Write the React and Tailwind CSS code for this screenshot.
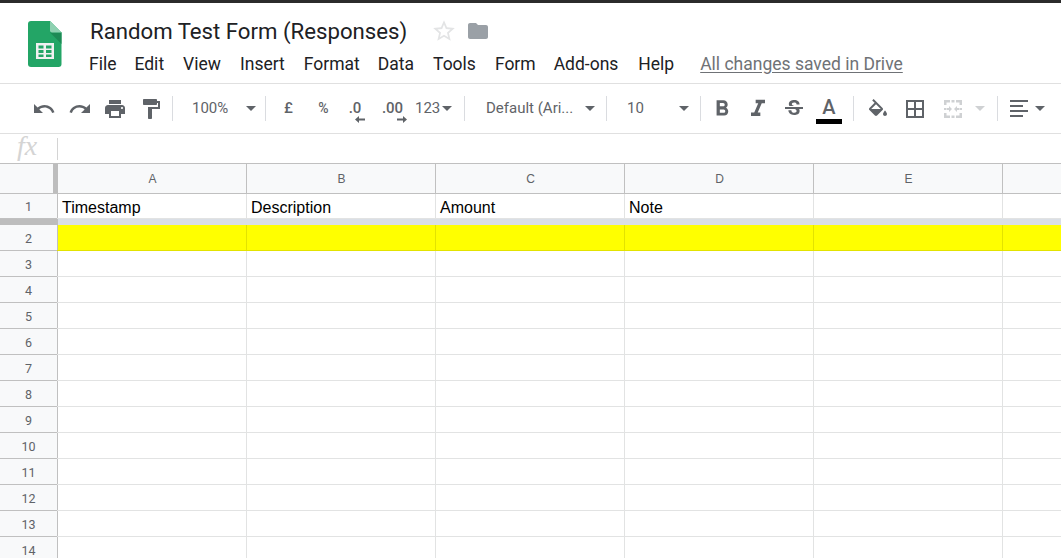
import React from "react";
import { MdUndo, MdRedo, MdPrint, MdFormatPaint, MdFormatBold, MdFormatItalic, MdStrikethroughS, MdStarBorder, MdFolder } from "react-icons/md";

const Logo = () => (
  <svg width="34" height="46" viewBox="0 0 34 46" className="shrink-0">
    <path d="M3 0H22L33.5 11.5V43a3 3 0 0 1-3 3H3a3 3 0 0 1-3-3V3a3 3 0 0 1 3-3z" fill="#23a566" />
    <path d="M22 11.5L33.5 23V11.5z" fill="#1c8a55" />
    <path d="M22 0L33.5 11.5H24a2 2 0 0 1-2-2z" fill="#8ed1b1" />
    <path d="M8 22H26V38H8z" fill="#f1f1f1" />
    <path d="M10.5 24.5H15.5V27.5H10.5zM18 24.5H23.5V27.5H18zM10.5 29H15.5V32H10.5zM18 29H23.5V32H18zM10.5 33.5H15.5V36H10.5zM18 33.5H23.5V36H18z" fill="#23a566" />
  </svg>
);

const Caret = ({ light }) => (
  <span className={`block w-0 h-0 border-x-[5px] border-x-transparent border-t-[5px] ${light ? "border-t-[#cfd1d3]" : "border-t-[#5f6368]"}`} />
);
const Sep = () => <span className="block w-px h-[25px] bg-[#dadce0] shrink-0" />;

const Tool = ({ w, children }) => (
  <div className={`flex items-center justify-center shrink-0 ${w}`}>{children}</div>
);

const Arrow = ({ left }) => (
  <svg width="10" height="7" viewBox="0 0 10 7" className="absolute bottom-[-3px] right-[-4px]">
    <path d={left ? "M10 2.5H4V0L0 3.5 4 7V4.5H10z" : "M0 2.5H6V0L10 3.5 6 7V4.5H0z"} fill="#5f6368" />
  </svg>
);

const Merge = () => (
  <svg width="24" height="24" viewBox="0 0 24 24" fill="#cfd1d3">
    <path d="M3 3h6v2.5H5.5V8H3zM15 3h6v5h-2.5V5.5H15zM10.5 3h3v2.5h-3zM3 21v-5h2.5v2.5H9V21zM21 16v5h-6v-2.5h3.5V16zM10.5 18.5h3V21h-3zM3 11h2.5v2H3zM18.5 11H21v2h-2.5zM6 11h2V9l3 3-3 3v-2H6zM18 13h-2v2l-3-3 3-3v2h2z" />
  </svg>
);

const Fill = () => (
  <svg width="24" height="24" viewBox="0 0 24 24" fill="currentColor">
    <path d="M16.56 8.94L7.62 0 6.21 1.41l2.38 2.38-5.15 5.15c-.59.59-.59 1.54 0 2.12l5.5 5.5c.29.29.68.44 1.06.44s.77-.15 1.06-.44l5.5-5.5c.59-.58.59-1.53 0-2.12zM5.21 10L10 5.21 14.79 10H5.21zM19 11.5s-2 2.17-2 3.5c0 1.1.9 2 2 2s2-.9 2-2c0-1.33-2-3.5-2-3.5z" transform="translate(0 2)" />
  </svg>
);

const Borders = () => (
  <svg width="24" height="24" viewBox="0 0 24 24" fill="currentColor">
    <path d="M3 3v18h18V3H3zm8 16H5v-6h6v6zm0-8H5V5h6v6zm8 8h-6v-6h6v6zm0-8h-6V5h6v6z" />
  </svg>
);

const Align = () => (
  <svg width="24" height="24" viewBox="0 0 24 24" fill="currentColor">
    <path d="M3 3h18v2H3zM3 8h13v2H3zM3 13h18v2H3zM3 18h13v2H3z" />
  </svg>
);

function Toolbar() {
  const icon = "w-[24px] h-[24px] text-[#5f6368]";
  return (
    <div className="h-[50px] shrink-0 border-b border-[#e0e0e0] flex items-center pl-[26px] overflow-hidden text-[#5f6368] font-['Roboto',sans-serif] text-[15px]">
      <Tool w="w-[36px]"><MdUndo className={icon} /></Tool>
      <Tool w="w-[35px]"><MdRedo className={icon} /></Tool>
      <Tool w="w-[36px]"><MdPrint className={icon} /></Tool>
      <Tool w="w-[36px]"><MdFormatPaint className={icon} /></Tool>
      <div className="w-[3px] shrink-0" />
      <Sep />
      <div className="w-[92px] shrink-0 flex items-center pl-[19px]">
        <span className="w-[37px]">100%</span>
        <span className="ml-[17px]"><Caret /></span>
      </div>
      <Sep />
      <Tool w="w-[45px]"><span className="font-medium">£</span></Tool>
      <Tool w="w-[25px]"><span className="text-[14px] font-medium">%</span></Tool>
      <Tool w="w-[38px]"><span className="relative font-medium">.0<Arrow left /></span></Tool>
      <Tool w="w-[37px]"><span className="relative font-medium">.00<Arrow /></span></Tool>
      <div className="w-[53px] shrink-0 flex items-center">
        <span className="ml-[4px]">123</span><span className="ml-[2px]"><Caret /></span>
      </div>
      <Sep />
      <div className="w-[141px] shrink-0 flex items-center pl-[21px] pr-[11px] justify-between">
        <span>Default (Ari...</span>
        <Caret />
      </div>
      <Sep />
      <div className="w-[93px] shrink-0 flex items-center pl-[20px] pr-[11px] justify-between">
        <span>10</span>
        <Caret />
      </div>
      <Sep />
      <Tool w="w-[42px]"><MdFormatBold className="w-[26px] h-[26px]" /></Tool>
      <Tool w="w-[30px]"><MdFormatItalic className="w-[28px] h-[28px]" /></Tool>
      <Tool w="w-[41px]"><MdStrikethroughS className="w-[24px] h-[24px]" /></Tool>
      <div className="w-[30px] shrink-0 flex flex-col items-center mt-[3px]">
        <span className="text-[20px] leading-[23px] font-medium">A</span>
        <span className="block w-[26px] h-[5px] bg-black" />
      </div>
      <div className="w-[9px] shrink-0" />
      <Sep />
      <Tool w="w-[48px]"><Fill /></Tool>
      <Tool w="w-[26px]"><Borders /></Tool>
      <Tool w="w-[50px]"><Merge /></Tool>
      <Tool w="w-[4px]"><Caret light /></Tool>
      <div className="w-[15px] shrink-0" />
      <Sep />
      <Tool w="w-[41px]"><Align /></Tool>
      <Tool w="w-[2px]"><Caret /></Tool>
    </div>
  );
}

const Cell = ({ children, yellow, last }) => (
  <div className={`${last ? "flex-1" : "w-[189px] border-r"} shrink-0 h-full flex items-center pl-[4px] pt-[3px] text-[16px] text-black font-['Liberation_Sans',sans-serif] overflow-hidden ${yellow ? "bg-[#ffff00] border-[#e3e300]" : "border-[#e2e3e3]"}`}>
    {children}
  </div>
);

const Row = ({ n, cells = [], yellow, h = "h-[26px]" }) => (
  <div className={`flex ${h} shrink-0 border-b ${yellow ? "border-[#e3e300]" : "border-[#e2e3e3]"}`}>
    <div className="w-[58px] shrink-0 bg-[#f8f9fa] border-r border-[#c0c0c0] flex items-center justify-center pt-[3px] text-[12.5px] text-[#5f6368] font-['Roboto',sans-serif] relative">
      {n}
      <span className="absolute left-0 right-0 bottom-[-1px] h-px bg-[#c0c0c0]" />
    </div>
    {[0, 1, 2, 3, 4].map((i) => <Cell key={i} yellow={yellow}>{cells[i]}</Cell>)}
    <Cell yellow={yellow} last />
  </div>
);

export default function App() {
  const menus = [["File", "ml-0"], ["Edit", "ml-[18px]"], ["View", "ml-[19px]"], ["Insert", "ml-[19px]"], ["Format", "ml-[19px]"], ["Data", "ml-[18px]"], ["Tools", "ml-[19px]"], ["Form", "ml-[19px]"], ["Add-ons", "ml-[18px]"], ["Help", "ml-[20px]"]];
  return (
    <div className="w-[1061px] h-[558px] overflow-hidden bg-white flex flex-col">
      <div className="h-[3px] bg-[#2b2b2b] shrink-0" />
      <header className="h-[81px] shrink-0 border-b border-[#e0e0e0] flex font-['Roboto',sans-serif]">
        <div className="pl-[28px] pt-[18px] w-[89px] shrink-0"><Logo /></div>
        <div className="flex flex-col">
          <div className="flex items-center h-[30px] mt-[13px]">
            <h1 className="text-[22.2px] leading-[30px] text-[#202124] ml-[1px] whitespace-nowrap">Random Test Form (Responses)</h1>
            <MdStarBorder className="w-[26px] h-[26px] text-[#e3e4e5] ml-[24px]" />
            <MdFolder className="w-[24px] h-[24px] text-[#9aa0a6] ml-[9px]" />
          </div>
          <nav className="flex items-center h-[24px] mt-[6px] text-[17.5px] text-[#202124] whitespace-nowrap">
            {menus.map(([m, c]) => <span key={m} className={c}>{m}</span>)}
            <span className="ml-[26px] text-[#6f7276] underline underline-offset-2">All changes saved in Drive</span>
          </nav>
        </div>
      </header>
      <Toolbar />
      <div className="h-[30px] shrink-0 flex items-center border-b border-[#c0c0c0]">
        <span className="w-[57px] shrink-0 pl-[17px] pb-[5px] text-[28px] italic text-[#d4d4d4] font-['Liberation_Serif',serif] leading-none">fx</span>
        <span className="block w-px h-[22px] bg-[#d4d4d4]" />
      </div>
      <div className="flex h-[30px] shrink-0 border-b border-[#c0c0c0] bg-[#f8f9fa] text-[12px] text-[#5f6368] font-['Liberation_Sans',sans-serif]">
        <div className="w-[58px] shrink-0 flex justify-end"><span className="block w-[5px] h-full bg-[#bdbdbd]" /></div>
        {["A", "B", "C", "D", "E"].map((c) => (
          <div key={c} className="w-[189px] shrink-0 border-r border-[#c0c0c0] flex items-center justify-center pl-[1px]">{c}</div>
        ))}
      </div>
      <Row n="1" h="h-[25px]" cells={["Timestamp", "Description", "Amount", "Note"]} />
      <div className="flex h-[6px] shrink-0">
        <div className="w-[58px] shrink-0 bg-[#bdbdbd]" />
        <div className="flex-1 bg-[#dadfe6]" />
      </div>
      <Row n="2" yellow />
      {Array.from({ length: 12 }, (_, i) => <Row key={i} n={String(i + 3)} />)}
    </div>
  );
}
